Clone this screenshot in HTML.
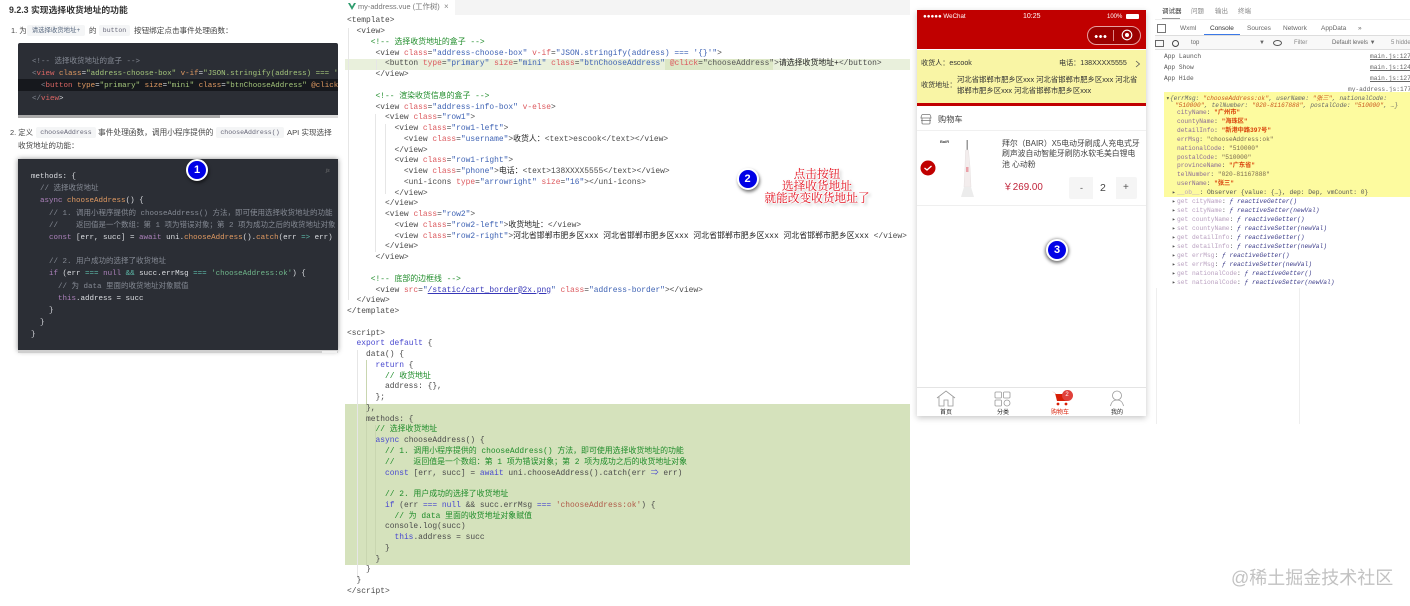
<!DOCTYPE html>
<html lang="zh"><head><meta charset="utf-8"><title>my-address</title>
<style>
html,body{margin:0;padding:0;background:#fff}
#p{position:relative;width:1410px;height:606px;overflow:hidden;background:#fff;font-family:"Liberation Sans","Noto Sans CJK SC",sans-serif;color:#444;filter:blur(.3px)}
.x{position:absolute;white-space:pre}
.b{position:absolute}
pre{margin:0;position:absolute;font-family:"Liberation Mono","Noto Sans CJK SC",monospace}
.chip{position:absolute;background:#f4f5f6;border-radius:2px;font-family:"Liberation Mono","Noto Sans CJK SC",monospace;color:#667;text-align:center;white-space:pre}
/* dark code */
.d{color:#d6d8dc;font-size:7.5px;line-height:12.17px}
.d i{font-style:normal;color:#858a94}.d u{text-decoration:none;color:#dc6664}.d em{font-style:normal;color:#a3c47a}.d b{font-weight:normal;color:#e09a62}.d s{text-decoration:none;color:#ad82bc}.d q{quotes:none;color:#5cb8a8}
/* editor */
.e{color:#4b4b4b;font-size:7.92px;line-height:10.77px}
.e u{text-decoration:none;color:#dc5a5f}.e s{text-decoration:none;color:#3f63b4}.e i{font-style:normal;color:#1f8c2a}.e b{font-weight:normal;color:#4848cf}.e q{quotes:none;color:#b05a48}.e a{color:#3636b8;text-decoration:underline}.e span{color:#222}
.g{position:absolute;width:1px;background:#e6e6e6}
.badge{position:absolute;width:18px;height:18px;border:2.5px solid #fff;border-radius:50%;background:#0000e6;color:#fff;font:bold 11px/18px "Liberation Sans",sans-serif;text-align:center;box-shadow:1px 2px 3px rgba(0,0,0,.55)}
.call{position:absolute;left:757px;width:120px;text-align:center;color:#e3101e;font:11.7px/12px "Noto Serif CJK SC",serif;text-shadow:0 0 1px #fff,0 0 2px #fff,0 0 2px #fff,1px 0 1px #fff,-1px 0 1px #fff,0 1px 1px #fff,0 -1px 1px #fff,2px 2px 3px #999;white-space:pre}
/* devtools */
.m{font-family:"Liberation Mono","Noto Sans CJK SC",monospace;font-size:6.2px;color:#555;position:absolute;white-space:pre;line-height:9px}
.m i{color:#8a6a96;font-style:normal}.m em{color:#c9581f;font-style:italic}.m b{color:#d8400a;font-weight:bold}.m q{quotes:none;color:#7a6a50}
.l{color:#3c3c8a;font-style:italic}
.n{color:#b9a0c0}
.tab{position:absolute;font-size:6.5px;color:#666;white-space:pre;line-height:9px}
</style></head><body><div id="p">

<!-- left doc -->
<div class="x" style="left:9px;top:4px;font-size:8.8px;line-height:13px;font-weight:bold;color:#333">9.2.3 实现选择收货地址的功能</div>
<div class="x" style="left:11px;top:25px;font-size:7.4px;line-height:11px;color:#444">1. 为</div>
<div class="chip" style="left:27px;top:25px;width:58px;height:11px;font-size:6.4px;line-height:11px;color:#5a6a80">请选择收货地址+</div>
<div class="x" style="left:89px;top:25px;font-size:7.4px;line-height:11px">的</div>
<div class="chip" style="left:99px;top:25px;width:31px;height:11px;font-size:6.5px;line-height:11px">button</div>
<div class="x" style="left:134px;top:25px;font-size:7.6px;line-height:11px">按钮绑定点击事件处理函数：</div>
<div class="b" style="left:18px;top:43px;width:320px;height:72px;background:#2b2e35;border-radius:2px 2px 0 0"></div>
<div class="b" style="left:18px;top:79px;width:320px;height:12px;background:#16181d"></div>
<div class="b" style="left:18px;top:115px;width:320px;height:3px;background:#dcdcdc"></div>
<div class="b" style="left:18px;top:115px;width:202px;height:3px;background:#a9a9a9"></div>
<div class="b" style="left:18px;top:43px;width:320px;height:75px;overflow:hidden">
<pre class="d" style="left:14px;top:13px"><i>&lt;!-- 选择收货地址的盒子 --&gt;</i>
<i>&lt;</i><u>view</u> <b>class</b>=<em>"address-choose-box"</em> <b>v-if</b>=<em>"JSON.stringify(address) === '{}'"</em>&gt;
  <i>&lt;</i><u>button</u> <b>type</b>=<em>"primary"</em> <b>size</b>=<em>"mini"</em> <b>class</b>=<em>"btnChooseAddress"</em> <b>@click</b>=<em>"chooseAddress"</em>&gt;
<i>&lt;/</i><u>view</u>&gt;</pre></div>

<div class="x" style="left:10px;top:127px;font-size:7.4px;line-height:11px">2. 定义</div>
<div class="chip" style="left:36px;top:127px;width:60px;height:11px;font-size:6.6px;line-height:11px">chooseAddress</div>
<div class="x" style="left:98px;top:127px;font-size:7.7px;line-height:11px">事件处理函数，调用小程序提供的</div>
<div class="chip" style="left:216px;top:127px;width:68px;height:11px;font-size:6.6px;line-height:11px">chooseAddress()</div>
<div class="x" style="left:287px;top:127px;font-size:7.6px;line-height:11px">API 实现选择</div>
<div class="x" style="left:18px;top:140px;font-size:7.6px;line-height:11px">收货地址的功能：</div>
<div class="b" style="left:18px;top:159px;width:320px;height:192px;background:#2b2e35;box-shadow:0 0 5px rgba(0,0,0,.45);overflow:hidden">
<pre class="d" style="left:13px;top:12px;color:#dcdee2">methods: {
  <i>// 选择收货地址</i>
  <s>async</s> <b>chooseAddress</b>() {
    <i>// 1. 调用小程序提供的 chooseAddress() 方法，即可使用选择收货地址的功能</i>
    <i>//    返回值是一个数组：第 1 项为错误对象；第 2 项为成功之后的收货地址对象</i>
    <s>const</s> [err, succ] = <s>await</s> uni.<b>chooseAddress</b>().<b>catch</b>(err <q>=&gt;</q> err)

    <i>// 2. 用户成功的选择了收货地址</i>
    <s>if</s> (err <q>===</q> <s>null</s> <q>&amp;&amp;</q> succ.errMsg <q>===</q> <em style="color:#6fb58a">'chooseAddress:ok'</em>) {
      <i>// 为 data 里面的收货地址对象赋值</i>
      <s>this</s>.address = succ
    }
  }
}</pre></div>
<div class="b" style="left:18px;top:350px;width:320px;height:3px;background:#cfcfcf"></div>
<div class="b" style="left:322px;top:351px;width:15px;height:2px;background:#f0f0f0"></div>
<div class="x" style="left:326px;top:168px;font-size:5px;color:#777;font-style:italic;line-height:7px">js</div>
<div class="badge" style="left:186px;top:159px">1</div>

<!-- editor -->
<div class="b" style="left:455px;top:0;width:455px;height:15px;background:#f4f4f4"></div>
<svg class="b" style="left:348px;top:3px" width="8" height="7" viewBox="0 0 8 7"><path d="M0 0L4 7L8 0H6L4 3.5L2 0Z" fill="#2f9c6e"/></svg>
<div class="x" style="left:358px;top:1px;font-size:7.4px;line-height:11px;color:#777">my-address.vue (工作树)</div>
<div class="x" style="left:444px;top:1px;font-size:8px;line-height:11px;color:#888">×</div>
<div class="b" style="left:345px;top:59px;width:565px;height:11px;background:#e9f0dc"></div>
<div class="b" style="left:665px;top:59px;width:108px;height:11px;background:#dce7c6"></div>
<div class="b" style="left:345px;top:404px;width:565px;height:161px;background:#d5e2bc"></div>
<div class="g" style="left:348px;top:28px;height:272px"></div>
<div class="g" style="left:357px;top:350px;height:228px"></div>
<div class="g" style="left:366px;top:360px;height:205px;background:#c9d6b0"></div>
<div class="g" style="left:376px;top:60px;height:10px"></div>
<div class="g" style="left:375px;top:114px;height:138px"></div>
<div class="g" style="left:385px;top:124px;height:70px"></div>
<div class="g" style="left:375px;top:425px;height:130px;background:#c9d6b0"></div>
<pre class="e" style="left:347px;top:16.4px">&lt;template&gt;
  &lt;view&gt;
     <i>&lt;!-- 选择收货地址的盒子 --&gt;</i>
      &lt;view <u>class</u>=<s>"address-choose-box"</s> <u>v-if</u>=<s>"JSON.stringify(address) === '{}'"</s>&gt;
        &lt;button <u>type</u>=<s>"primary"</s> <u>size</u>=<s>"mini"</s> <u>class</u>=<s>"btnChooseAddress"</s> <u>@click</u>=<s style="color:#555">"chooseAddress"</s>&gt;<span>请选择收货地址+</span>&lt;/button&gt;
      &lt;/view&gt;

      <i>&lt;!-- 渲染收货信息的盒子 --&gt;</i>
      &lt;view <u>class</u>=<s>"address-info-box"</s> <u>v-else</u>&gt;
        &lt;view <u>class</u>=<s>"row1"</s>&gt;
          &lt;view <u>class</u>=<s>"row1-left"</s>&gt;
            &lt;view <u>class</u>=<s>"username"</s>&gt;<span>收货人：</span>&lt;text&gt;escook&lt;/text&gt;&lt;/view&gt;
          &lt;/view&gt;
          &lt;view <u>class</u>=<s>"row1-right"</s>&gt;
            &lt;view <u>class</u>=<s>"phone"</s>&gt;<span>电话：</span>&lt;text&gt;138XXXX5555&lt;/text&gt;&lt;/view&gt;
            &lt;uni-icons <u>type</u>=<s>"arrowright"</s> <u>size</u>=<s>"16"</s>&gt;&lt;/uni-icons&gt;
          &lt;/view&gt;
        &lt;/view&gt;
        &lt;view <u>class</u>=<s>"row2"</s>&gt;
          &lt;view <u>class</u>=<s>"row2-left"</s>&gt;<span>收货地址：</span>&lt;/view&gt;
          &lt;view <u>class</u>=<s>"row2-right"</s>&gt;<span>河北省邯郸市肥乡区xxx 河北省邯郸市肥乡区xxx 河北省邯郸市肥乡区xxx 河北省邯郸市肥乡区xxx</span> &lt;/view&gt;
        &lt;/view&gt;
      &lt;/view&gt;

     <i>&lt;!-- 底部的边框线 --&gt;</i>
      &lt;view <u>src</u>=<s>"<a>/static/cart_border@2x.png</a>"</s> <u>class</u>=<s>"address-border"</s>&gt;&lt;/view&gt;
  &lt;/view&gt;
&lt;/template&gt;

&lt;script&gt;
  <b>export default</b> {
    data() {
      <b>return</b> {
        <i>// 收货地址</i>
        address: {},
      };
    },
    methods: {
      <i>// 选择收货地址</i>
      <b>async</b> chooseAddress() {
        <i>// 1. 调用小程序提供的 chooseAddress() 方法，即可使用选择收货地址的功能</i>
        <i>//    返回值是一个数组：第 1 项为错误对象；第 2 项为成功之后的收货地址对象</i>
        <b>const</b> [err, succ] = <b>await</b> uni.chooseAddress().catch(err <b>⇒</b> err)

        <i>// 2. 用户成功的选择了收货地址</i>
        <b>if</b> (err <b>===</b> <b>null</b> &amp;&amp; succ.errMsg <b>===</b> <q>'chooseAddress:ok'</q>) {
          <i>// 为 data 里面的收货地址对象赋值</i>
        console.log(succ)
          <b>this</b>.address = succ
        }
      }
    }
  }
&lt;/script&gt;</pre>
<div class="badge" style="left:736.5px;top:167.5px">2</div>
<div class="call" style="top:168px">点击按钮
选择收货地址
就能改变收货地址了</div>

<!-- phone -->
<div class="b" style="left:917px;top:10px;width:229px;height:406px;background:#fff;box-shadow:0 2px 6px rgba(0,0,0,.22)"></div>
<div class="b" style="left:917px;top:10px;width:229px;height:39px;background:#c00000"></div>
<div class="x" style="left:923px;top:12px;font-size:6.2px;line-height:9px;color:#fff">●●●●● WeChat</div>
<div class="x" style="left:1023px;top:12px;font-size:7px;line-height:9px;color:#fff">10:25</div>
<div class="x" style="left:1107px;top:13px;font-size:6px;line-height:8px;color:#fff">100%</div>
<div class="b" style="left:1126px;top:14px;width:13px;height:5px;background:#fff;border-radius:1px"></div>
<div class="b" style="left:1087px;top:26px;width:52px;height:17px;border:.7px solid #e8a0a0;border-radius:10px;background:#9c0000"></div>
<div class="b" style="left:1094px;top:35px;width:13px;height:3px;background:radial-gradient(circle,#fff 1.4px,transparent 1.6px) 0 0/4.4px 3px repeat-x"></div>
<div class="b" style="left:1113px;top:30px;width:1px;height:11px;background:#d88"></div>
<svg class="b" style="left:1121px;top:29px" width="12" height="12"><circle cx="6" cy="6" r="4.8" fill="none" stroke="#fff" stroke-width="1.1"/><circle cx="6" cy="6" r="2" fill="#fff"/></svg>
<div class="b" style="left:917px;top:50px;width:229px;height:53px;background:#f9f5a5"></div>
<div class="b" style="left:917px;top:103px;width:229px;height:3px;background:#c00000"></div>
<div class="x" style="left:921px;top:59px;font-size:7.1px;line-height:9px;color:#333">收货人：escook</div>
<div class="x" style="left:1059px;top:59px;font-size:7.1px;line-height:9px;color:#333">电话：138XXXX5555</div>
<svg class="b" style="left:1135px;top:60px" width="6" height="8"><path d="M1 1L4.5 4L1 7" fill="none" stroke="#555" stroke-width=".8"/></svg>
<div class="x" style="left:921px;top:81px;font-size:7.1px;line-height:9px;color:#333">收货地址：</div>
<div class="x" style="left:957px;top:75px;font-size:7.35px;line-height:10.5px;color:#333">河北省邯郸市肥乡区xxx 河北省邯郸市肥乡区xxx 河北省
邯郸市肥乡区xxx 河北省邯郸市肥乡区xxx</div>
<svg class="b" style="left:920px;top:113px" width="12" height="12" viewBox="0 0 12 12"><path d="M2.5 1.5H9.5Q10.5 1.5 11 5H1Q1.5 1.5 2.5 1.5ZM2 5V10Q2 11 3 11H9Q10 11 10 10V5M1 7.5H11" fill="none" stroke="#777" stroke-width=".8"/></svg>
<div class="x" style="left:938px;top:114px;font-size:8.2px;line-height:11px;color:#444">购物车</div>
<div class="b" style="left:917px;top:130px;width:229px;height:1px;background:#f0f0f0"></div>
<svg class="b" style="left:920px;top:160px" width="16" height="16"><circle cx="8" cy="8" r="7.5" fill="#c00000"/><path d="M4.5 8L7 10L11.5 6" fill="none" stroke="#fff" stroke-width="1.3"/></svg>
<div class="x" style="left:940px;top:139px;font-size:4px;line-height:5px;color:#444;font-weight:bold">BaiR</div>
<svg class="b" style="left:960px;top:137px" width="16" height="62" viewBox="0 0 16 62"><rect x="6.5" y="3" width="1.5" height="10" fill="#999"/><path d="M5.5 13H8.5L10 30L11 50H4L5 30Z" fill="#f3eded" stroke="#e6e0e0" stroke-width=".5"/><rect x="6" y="30" width="2.5" height="5" fill="#eaa0a8"/><path d="M1 60L4 50H11L14 60Z" fill="#ececec"/></svg>
<div class="x" style="left:1002px;top:138.5px;font-size:7.85px;line-height:10.7px;color:#444">拜尔（BAIR）X5电动牙刷成人充电式牙
刷声波自动智能牙刷防水软毛美白锂电
池 心动粉</div>
<div class="x" style="left:1003px;top:182px;font-size:9.8px;line-height:12px;color:#c0243a">￥269.00</div>
<div class="b" style="left:1069px;top:177px;width:68px;height:22px;background:#f5f5f5;border-radius:2px"></div>
<div class="b" style="left:1093px;top:177px;width:23px;height:22px;background:#fff"></div>
<div class="x" style="left:1080px;top:182px;font-size:9px;line-height:12px;color:#555">-</div>
<div class="x" style="left:1100px;top:182px;font-size:10.5px;line-height:12px;color:#444">2</div>
<div class="x" style="left:1123px;top:182px;font-size:10px;line-height:12px;color:#555">+</div>
<div class="b" style="left:917px;top:205px;width:229px;height:1px;background:#efefef"></div>
<div class="badge" style="left:1046px;top:238.5px;box-shadow:0 1px 3px 1px rgba(0,0,0,.55)">3</div>
<div class="b" style="left:917px;top:387px;width:229px;height:1px;background:#e4e4e4"></div>
<svg class="b" style="left:936px;top:390px" width="20" height="17" viewBox="0 0 20 17"><path d="M1 8L10 1L19 8M3 7V16H8V10H12V16H17V7" fill="none" stroke="#999" stroke-width=".8"/></svg>
<svg class="b" style="left:994px;top:391px" width="18" height="16" viewBox="0 0 18 16"><g fill="none" stroke="#999" stroke-width=".8"><rect x="1" y="1" width="6.5" height="6" rx="1"/><rect x="9.5" y="1" width="6.5" height="6" rx="1"/><rect x="1" y="9" width="6.5" height="6" rx="1"/><circle cx="13" cy="12" r="3"/></g></svg>
<svg class="b" style="left:1056px;top:391px;overflow:visible" width="14" height="16" viewBox="0 0 14 16"><path d="M-4 0L-1 2L1 10H11L13 3H0Z" fill="#d81e06"/><circle cx="2" cy="13" r="1.4" fill="#d81e06"/><circle cx="10" cy="13" r="1.4" fill="#d81e06"/></svg>
<div class="b" style="left:1061.5px;top:389.5px;width:11px;height:11px;border-radius:50%;background:#e0413b;color:#fff;font-size:6px;line-height:11px;text-align:center">2</div>
<svg class="b" style="left:1108px;top:390px" width="18" height="17" viewBox="0 0 18 17"><circle cx="9" cy="5.5" r="4.5" fill="none" stroke="#999" stroke-width=".8"/><path d="M2.5 16C3.5 11.5 5.5 10 9 10S14.500 11.500 15.500 16" fill="none" stroke="#999" stroke-width=".8"/></svg>
<div class="x" style="left:940px;top:409px;font-size:6px;line-height:8px;color:#222">首页</div>
<div class="x" style="left:997px;top:409px;font-size:6px;line-height:8px;color:#222">分类</div>
<div class="x" style="left:1051px;top:409px;font-size:6px;line-height:8px;color:#d81e06">购物车</div>
<div class="x" style="left:1111px;top:409px;font-size:6px;line-height:8px;color:#222">我的</div>

<!-- devtools -->
<div class="tab" style="left:1162px;top:7px;color:#333">调试器</div>
<div class="tab" style="left:1191px;top:7px;color:#888">问题</div>
<div class="tab" style="left:1215px;top:7px;color:#888">输出</div>
<div class="tab" style="left:1238px;top:7px;color:#888">终端</div>
<div class="b" style="left:1162px;top:18px;width:18px;height:1px;background:#999"></div>
<div class="b" style="left:1155px;top:19px;width:255px;height:1px;background:#eee"></div>
<div class="b" style="left:1157px;top:24px;width:7px;height:7px;border:.7px solid #777"></div>
<div class="tab" style="left:1180px;top:24px">Wxml</div>
<div class="tab" style="left:1210px;top:24px;color:#333">Console</div>
<div class="tab" style="left:1247px;top:24px">Sources</div>
<div class="tab" style="left:1283px;top:24px">Network</div>
<div class="tab" style="left:1321px;top:24px">AppData</div>
<div class="tab" style="left:1358px;top:24px">»</div>
<div class="b" style="left:1204px;top:34px;width:36px;height:1px;background:#3b78e7"></div>
<div class="b" style="left:1155px;top:35px;width:255px;height:1px;background:#ddd"></div>
<div class="b" style="left:1155px;top:36px;width:255px;height:13px;background:#f8f8f8"></div>
<div class="b" style="left:1155px;top:40px;width:7px;height:5px;border:.7px solid #666"></div>
<div class="b" style="left:1172px;top:40px;width:5px;height:5px;border:1px solid #444;border-radius:50%"></div>
<div class="tab" style="left:1191px;top:39px;font-size:6px">top</div>
<div class="tab" style="left:1259px;top:39px;font-size:6px">▼</div>
<div class="b" style="left:1273px;top:40px;width:7px;height:4px;border:1px solid #555;border-radius:50%"></div>
<div class="tab" style="left:1294px;top:39px;font-size:6px;color:#888">Filter</div>
<div class="tab" style="left:1332px;top:39px;font-size:6px">Default levels ▼</div>
<div class="tab" style="left:1391px;top:39px;font-size:6px;color:#888">5 hidden</div>
<div class="b" style="left:1155px;top:49px;width:255px;height:1px;background:#ddd"></div>
<div class="m" style="left:1164px;top:52px">App Launch</div>
<div class="m" style="left:1164px;top:63px">App Show</div>
<div class="m" style="left:1164px;top:74px">App Hide</div>
<div class="m" style="left:1370px;top:52px;text-decoration:underline;color:#666">main.js:127</div>
<div class="m" style="left:1370px;top:63px;text-decoration:underline;color:#666">main.js:124</div>
<div class="m" style="left:1370px;top:74px;text-decoration:underline;color:#666">main.js:127</div>
<div class="m" style="left:1348px;top:85px;text-decoration:underline;color:#666">my-address.js:177</div>
<div class="b" style="left:1164px;top:92px;width:246px;height:105px;background:#fdfb9f"></div>
<div class="m" style="left:1166px;top:94px;color:#444">▾</div>
<div class="m" style="left:1170px;top:94px;font-size:6.1px;font-style:italic;color:#666">{errMsg: <em>"chooseAddress:ok"</em>, userName: <em>"张三"</em>, nationalCode:</div>
<div class="m" style="left:1175px;top:101px;font-size:6.1px;font-style:italic;color:#666"><em>"510000"</em>, telNumber: <em>"020-81167888"</em>, postalCode: <em>"510000"</em>, …}</div>
<div class="m" style="left:1177px;top:109px;line-height:8.9px;font-size:6.2px"><i>cityName</i>: <b>"广州市"</b>
<i>countyName</i>: <b>"海珠区"</b>
<i>detailInfo</i>: <b>"新港中路397号"</b>
<i>errMsg</i>: <q>"chooseAddress:ok"</q>
<i>nationalCode</i>: <q>"510000"</q>
<i>postalCode</i>: <q>"510000"</q>
<i>provinceName</i>: <b>"广东省"</b>
<i>telNumber</i>: <q>"020-81167888"</q>
<i>userName</i>: <b>"张三"</b></div>
<div class="m" style="left:1172px;top:189px;line-height:8.95px;font-size:6px;color:#555">▸
▸
▸
▸
▸
▸
▸
▸
▸
▸
▸</div>
<div class="m" style="left:1177px;top:189px;line-height:8.95px;font-size:6.25px"><span class="n">__ob__</span>: Observer {value: {…}, dep: Dep, vmCount: 0}
<span class="n">get cityName</span>: <span class="l">ƒ reactiveGetter()</span>
<span class="n">set cityName</span>: <span class="l">ƒ reactiveSetter(newVal)</span>
<span class="n">get countyName</span>: <span class="l">ƒ reactiveGetter()</span>
<span class="n">set countyName</span>: <span class="l">ƒ reactiveSetter(newVal)</span>
<span class="n">get detailInfo</span>: <span class="l">ƒ reactiveGetter()</span>
<span class="n">set detailInfo</span>: <span class="l">ƒ reactiveSetter(newVal)</span>
<span class="n">get errMsg</span>: <span class="l">ƒ reactiveGetter()</span>
<span class="n">set errMsg</span>: <span class="l">ƒ reactiveSetter(newVal)</span>
<span class="n">get nationalCode</span>: <span class="l">ƒ reactiveGetter()</span>
<span class="n">set nationalCode</span>: <span class="l">ƒ reactiveSetter(newVal)</span></div>
<div class="b" style="left:1156px;top:288px;width:1px;height:136px;background:#eee"></div>
<div class="b" style="left:1299px;top:288px;width:1px;height:136px;background:#eee"></div>

<div class="x" style="left:1231px;top:566px;font-size:18px;line-height:24px;color:#c2c2c2">@稀土掘金技术社区</div>
</div></body></html>
